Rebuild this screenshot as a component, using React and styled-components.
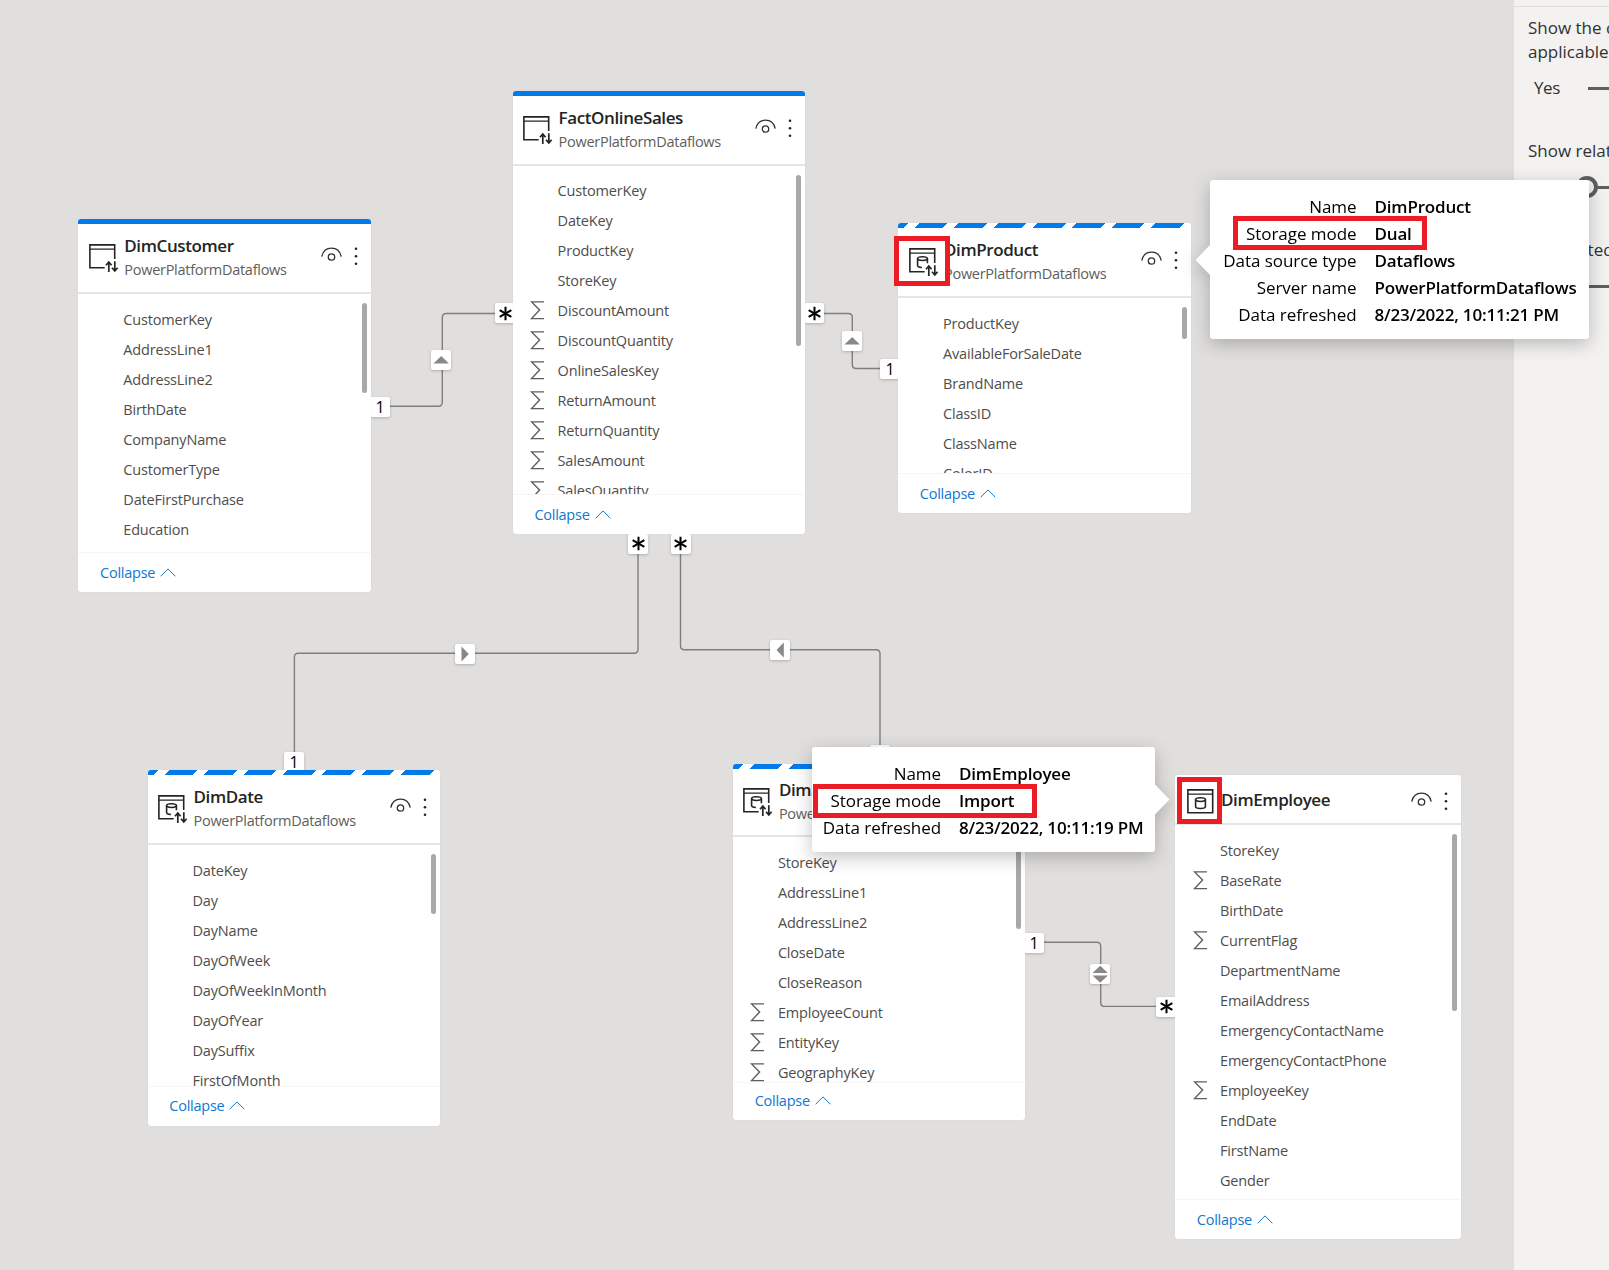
import React from 'react';
import styled, { createGlobalStyle, css } from 'styled-components';
import { Asterisk } from 'lucide-react';

const GlobalStyle = createGlobalStyle`
  * { box-sizing: border-box; }
  body { margin: 0; font-family: 'Open Sans', 'Noto Sans', sans-serif; }
`;

const Screen = styled.div`
  position: relative;
  display: flex;
  width: 1609px;
  height: 1270px;
  overflow: hidden;
`;

const Canvas = styled.main`
  position: relative;
  flex: 1;
  min-width: 0;
  background: #e0dfdd;
`;

const Links = styled.svg`
  position: absolute;
  inset: 0;
  fill: none;
  stroke: #7f7e7c;
  stroke-width: 1.4;
`;

const Marker = styled.div`
  position: absolute;
  left: ${p => p.$x}px;
  top: ${p => p.$y}px;
  width: ${p => p.$w || 20}px;
  height: 20px;
  display: flex;
  align-items: center;
  justify-content: center;
  background: #fff;
  border-radius: 2px;
  box-shadow: 0 1px 3px rgba(0, 0, 0, 0.22);
  color: #000;
  font-size: 16px;
  font-weight: 500;
  line-height: 20px;
  svg { flex: none; display: block; }
  path { stroke-linecap: butt; }
`;

/* ---------- table cards ---------- */

const CardFrame = styled.section`
  position: absolute;
  left: ${p => p.$x}px;
  top: ${p => p.$y}px;
  width: ${p => p.$w}px;
  height: ${p => p.$h}px;
  display: flex;
  flex-direction: column;
  overflow: hidden;
  background: #fff;
  border-radius: 3px;
  box-shadow: 0 0 1px rgba(0, 0, 0, 0.12);
`;

const accents = {
  solid: css`background: #027bea;`,
  striped: css`
    background: repeating-linear-gradient(
      135deg,
      #027bea 0 7.4px,
      #fff 7.4px 15.1px,
      #027bea 15.1px 27.85px
    );
  `,
};

const Accent = styled.div`
  flex: none;
  height: 5px;
  ${p => accents[p.$kind]}
`;

const CardHeader = styled.header`
  flex: none;
  display: flex;
  height: ${p => p.$h}px;
  padding: ${p => p.$pad}px 13px 0 ${p => p.$left}px;
  border-bottom: 2px solid #e6e5e4;
`;

const IconSlot = styled.div`
  flex: none;
  width: ${p => p.$w}px;
  padding-top: ${p => p.$top}px;
  svg { display: block; }
`;

const Titles = styled.div`
  flex: 1;
  min-width: 0;
  white-space: nowrap;
`;

const Title = styled.div`
  font-size: 17px;
  font-weight: 550;
  line-height: 24px;
  letter-spacing: -0.4px;
  color: #252423;
`;

const Subtitle = styled.div`
  font-size: 14.5px;
  font-weight: 380;
  line-height: 24px;
  letter-spacing: -0.28px;
  color: #605e5c;
`;

const Actions = styled.div`
  flex: none;
  display: flex;
  gap: 12px;
  padding-top: ${p => p.$top}px;
  svg { display: block; }
`;

const FieldList = styled.div`
  position: relative;
  flex: 1;
  min-height: 0;
  overflow: hidden;
  padding-top: ${p => p.$pad}px;
`;

const FieldRow = styled.div`
  display: flex;
  align-items: center;
  height: 30px;
  padding-left: 17.5px;
  font-size: 14.5px;
  line-height: 30px;
  letter-spacing: -0.18px;
  color: #4f4d4b;
`;

const SigmaSlot = styled.span`
  flex: none;
  width: 27.5px;
  height: 20px;
  svg { display: block; }
`;

const Scrollbar = styled.div`
  position: absolute;
  top: 9px;
  right: 4px;
  width: 5px;
  height: ${p => p.$h}px;
  border-radius: 3px;
  background: #a8a8a8;
`;

const CardFooter = styled.footer`
  flex: none;
  display: flex;
  align-items: center;
  gap: 5px;
  height: ${p => p.$h}px;
  padding-left: 21.8px;
  border-top: 1px solid #f7f6f5;
  font-size: 14.5px;
  line-height: 38px;
  letter-spacing: -0.25px;
  color: #1078d0;
  svg { margin-top: -1px; }
`;

/* ---------- tooltips and highlights ---------- */

const Tip = styled.dl`
  position: absolute;
  left: ${p => p.$x}px;
  top: ${p => p.$y}px;
  width: ${p => p.$w}px;
  height: ${p => p.$h}px;
  margin: 0;
  padding-top: 13px;
  display: grid;
  grid-template-columns: ${p => p.$label}px 1fr;
  grid-auto-rows: 27px;
  column-gap: 18.5px;
  background: #fff;
  border-radius: 3px;
  filter: drop-shadow(0 5px 9px rgba(0, 0, 0, 0.24));
  font-size: 17px;
  line-height: 27px;
  color: #000;
  white-space: nowrap;
  &::before {
    content: '';
    position: absolute;
    top: ${p => p.$arrow}px;
    ${p => (p.$side === 'left' ? 'right: 100%;' : 'left: 100%;')}
    width: 14.5px;
    height: 30px;
    background: #fff;
    clip-path: ${p =>
      p.$side === 'left' ? 'polygon(100% 0, 0 50%, 100% 100%)' : 'polygon(0 0, 100% 50%, 0 100%)'};
  }
`;

const TipLabel = styled.dt`
  text-align: right;
  letter-spacing: -0.05px;
  margin-right: -0.5px;
`;

const TipValue = styled.dd`
  margin: 0;
  font-weight: 550;
  letter-spacing: -0.18px;
`;

const Highlight = styled.div`
  position: absolute;
  left: ${p => p.$x}px;
  top: ${p => p.$y}px;
  width: ${p => p.$w}px;
  height: ${p => p.$h}px;
  border: 5px solid #ed1c24;
`;

/* ---------- settings panel ---------- */

const Panel = styled.aside`
  flex: none;
  width: 95px;
  overflow: hidden;
  background: #f3f2f1;
  color: #323130;
  font-size: 17px;
  line-height: 24px;
  white-space: nowrap;
`;

const PanelEdge = styled.div`
  height: 7px;
  border-bottom: 1px solid #dddcda;
`;

const Setting = styled.div`
  padding: ${p => p.$top}px 0 0 14px;
`;

const Toggle = styled.div`
  display: flex;
  align-items: center;
  height: 24px;
  margin-top: 12px;
  padding-left: 6px;
`;

const ToggleLabel = styled.span`
  flex: none;
  width: 54px;
  letter-spacing: -0.4px;
`;

const Knob = styled.span`
  flex: none;
  width: 22px;
  height: 22px;
  margin-left: 42px;
  border: 4px solid #605e5c;
  border-radius: 50%;
`;

const Track = styled.span`
  flex: none;
  width: 60px;
  height: 3px;
  margin-top: 1px;
  background: #605e5c;
`;

/* ---------- drawings ---------- */

const Arrows = () => (
  <g strokeWidth="1.7">
    <path d="M19.8 28V18.2M17 21.200l2.800-3.200 2.800 3.200" />
    <path d="M25.800 17.200V27M23 23.800l2.800 3.200 2.800-3.200" />
  </g>
);

const Cylinder = () => (
  <>
    <ellipse cx="13.500" cy="10.600" rx="4.900" ry="1.900" />
    <path d="M8.600 10.600v6.900c0 1.200 2.200 2 4.900 2s4.900-.8 4.900-2v-6.900" />
  </>
);

const CutCylinder = () => (
  <>
    <ellipse cx="13.500" cy="10.600" rx="4.900" ry="1.900" />
    <path d="M8.600 10.600v6.900c0 1 1.600 1.800 4.300 2M18.400 10.600v4.600" />
  </>
);

function TableIcon({ mode }) {
  const open = mode !== 'import';
  return (
    <svg width="30" height="30" viewBox="0 0 30 30" fill="none" stroke="#252423" strokeWidth="1.6">
      {open ? <path d="M25.700 15V.9H.9v22.900h14.800" /> : <path d="M.9.9h24.800v22.900H.9z" />}
      <path d="M.9 5.100h24.800" strokeWidth="1.3" />
      {mode === 'dual' && <CutCylinder />}
      {mode === 'import' && <Cylinder />}
      {open && <Arrows />}
    </svg>
  );
}

const EyeIcon = () => (
  <svg width="21" height="16" viewBox="0 0 21 16" fill="none" stroke="#323130" strokeWidth="1.3">
    <path d="M.8 9.600C1.900 4.400 5.700 1.200 10.500 1.200S19.100 4.400 20.200 9.600" />
    <circle cx="10.500" cy="10" r="3.200" />
  </svg>
);

const MoreIcon = () => (
  <svg width="4" height="20" viewBox="0 0 4 20" fill="#252423">
    <circle cx="2" cy="1.800" r="1.300" />
    <circle cx="2" cy="9.300" r="1.300" />
    <circle cx="2" cy="16.800" r="1.300" />
  </svg>
);

const Sigma = () => (
  <svg width="15" height="19" viewBox="0 0 15 19" fill="none" stroke="#605e5c" strokeWidth="1.4">
    <path d="M14 .9H1.600L9.600 9 1.600 17.600H14" />
  </svg>
);

const Chevron = () => (
  <svg width="16" height="9" viewBox="0 0 16 9" fill="none" stroke="#1078d0" strokeWidth="1">
    <path d="M.6 8.300 8 .9l7.400 7.400" />
  </svg>
);

const trianglePaths = {
  up: 'M2.500 13.500 10.200 6l7.700 7.500z',
  right: 'M6.500 2.500 13.800 10l-7.300 7.500z',
  left: 'M13.800 2.500 6.500 10l7.300 7.500z',
  both: 'M2.500 9 10.200 1.700 17.900 9zM2.500 11.500H17.900L10.200 18.800z',
};

const Direction = ({ dir }) => (
  <svg width="20" height="20" viewBox="0 0 20 20" fill="#8a8886">
    <path d={trianglePaths[dir]} />
  </svg>
);

/* ---------- data ---------- */

const SOURCE = 'PowerPlatformDataflows';

const tables = [
  {
    name: 'DimCustomer', source: SOURCE, mode: 'direct', accent: 'solid',
    x: 78.300, y: 219.300, w: 293, h: 373, scroll: 90,
    fields: ['CustomerKey', 'AddressLine1', 'AddressLine2', 'BirthDate', 'CompanyName', 'CustomerType', 'DateFirstPurchase', 'Education'],
  },
  {
    name: 'FactOnlineSales', source: SOURCE, mode: 'direct', accent: 'solid', listPad: 9.6,
    x: 512.600, y: 91, w: 292.400, h: 443, scroll: 171,
    fields: ['CustomerKey', 'DateKey', 'ProductKey', 'StoreKey', '+DiscountAmount', '+DiscountQuantity', '+OnlineSalesKey', '+ReturnAmount', '+ReturnQuantity', '+SalesAmount', '+SalesQuantity'],
  },
  {
    name: 'DimProduct', source: SOURCE, mode: 'dual', accent: 'striped',
    x: 898, y: 223, w: 293, h: 290, scroll: 32,
    fields: ['ProductKey', 'AvailableForSaleDate', 'BrandName', 'ClassID', 'ClassName', 'ColorID'],
  },
  {
    name: 'DimDate', source: SOURCE, mode: 'dual', accent: 'striped',
    x: 147.500, y: 770.300, w: 292.500, h: 355.700, scroll: 60,
    fields: ['DateKey', 'Day', 'DayName', 'DayOfWeek', 'DayOfWeekInMonth', 'DayOfYear', 'DaySuffix', 'FirstOfMonth'],
  },
  {
    name: 'DimStore', source: SOURCE, mode: 'dual', accent: 'striped', lift: 2, footer: 38.5,
    x: 732.900, y: 764, w: 292.600, h: 356, scroll: 83,
    fields: ['StoreKey', 'AddressLine1', 'AddressLine2', 'CloseDate', 'CloseReason', '+EmployeeCount', '+EntityKey', '+GeographyKey'],
  },
  {
    name: 'DimEmployee', mode: 'import',
    x: 1175, y: 775, w: 286, h: 464, scroll: 177,
    fields: ['StoreKey', '+BaseRate', 'BirthDate', '+CurrentFlag', 'DepartmentName', 'EmailAddress', 'EmergencyContactName', 'EmergencyContactPhone', '+EmployeeKey', 'EndDate', 'FirstName', 'Gender'],
  },
];

const links = [
  'M390 406.300H438.300Q442.300 406.300 442.300 402.300V317.500Q442.300 313.500 446.300 313.500H496',
  'M823 313.500H848.300Q852.300 313.500 852.300 317.500V364.500Q852.300 368.500 856.300 368.500H881',
  'M638 552V649.300Q638 653.300 634 653.300H298.400Q294.400 653.300 294.400 657.300V753',
  'M680.500 552V645.800Q680.500 649.800 684.500 649.800H876Q880 649.800 880 653.800V746',
  'M1043 942.300H1096.700Q1100.700 942.300 1100.700 946.300V1002.400Q1100.700 1006.400 1104.700 1006.400H1158',
];

const ends = [
  { kind: 'one', x: 370, y: 396.500, w: 20 },
  { kind: 'many', x: 495, y: 303.400, w: 20 },
  { kind: 'many', x: 804, y: 303.400, w: 20 },
  { kind: 'one', x: 880, y: 358.500, w: 20 },
  { kind: 'many', x: 628, y: 533.500 },
  { kind: 'many', x: 670.500, y: 533.500 },
  { kind: 'one', x: 284, y: 752 },
  { kind: 'one', x: 870, y: 745 },
  { kind: 'one', x: 1024, y: 932.500, w: 20 },
  { kind: 'many', x: 1156.400, y: 996.600, w: 20 },
];

const directions = [
  { dir: 'up', x: 431.300, y: 349.500 },
  { dir: 'up', x: 841.500, y: 331 },
  { dir: 'right', x: 455, y: 643.500 },
  { dir: 'left', x: 770.300, y: 639.500 },
  { dir: 'both', x: 1090.300, y: 963.500 },
];

const tips = [
  {
    x: 1210, y: 180, w: 379, h: 159, label: 146, side: 'left', arrow: 65,
    rows: [['Name', 'DimProduct'], ['Storage mode', 'Dual'], ['Data source type', 'Dataflows'], ['Server name', SOURCE], ['Data refreshed', '8/23/2022, 10:11:21 PM']],
  },
  {
    x: 812, y: 747, w: 343, h: 105, label: 128.500, side: 'right', arrow: 37.500,
    rows: [['Name', 'DimEmployee'], ['Storage mode', 'Import'], ['Data refreshed', '8/23/2022, 10:11:19 PM']],
  },
];

const highlights = [
  { x: 894, y: 236, w: 56, h: 50 },
  { x: 1233, y: 216, w: 194, h: 34 },
  { x: 813, y: 784, w: 224, h: 34 },
  { x: 1177, y: 777, w: 45, h: 47 },
];

function TableCard({ table }) {
  const { name, source, mode, accent, x, y, w, h, scroll, fields, lift = 0, listPad = 10.5, footer = 40 } = table;
  const compact = !accent;
  return (
    <CardFrame $x={x} $y={y} $w={w} $h={h}>
      {accent && <Accent $kind={accent} />}
      <CardHeader $h={(compact ? 50 : 70) - lift} $pad={(compact ? 13.4 : 9.5) - lift / 2} $left={compact ? 12 : 10.5}>
        <IconSlot $w={compact ? 34 : 35.5} $top={compact ? 0.6 : 10}>
          <TableIcon mode={mode} />
        </IconSlot>
        <Titles>
          <Title>{name}</Title>
          {source && <Subtitle>{source}</Subtitle>}
        </Titles>
        <Actions $top={compact ? 4.1 : 13.5}>
          <EyeIcon />
          <MoreIcon />
        </Actions>
      </CardHeader>
      <FieldList $pad={listPad}>
        {fields.map(f => (
          <FieldRow key={f}>
            <SigmaSlot>{f[0] === '+' && <Sigma />}</SigmaSlot>
            {f.replace('+', '')}
          </FieldRow>
        ))}
        <Scrollbar $h={scroll} />
      </FieldList>
      <CardFooter $h={footer}>
        Collapse
        <Chevron />
      </CardFooter>
    </CardFrame>
  );
}

export default function App() {
  return (
    <Screen>
      <GlobalStyle />
      <Canvas>
        <Links width="1514" height="1270">
          {links.map(d => <path key={d} d={d} />)}
        </Links>
        {ends.map(e => (
          <Marker key={`${e.x}-${e.y}`} $x={e.x} $y={e.y} $w={e.w}>
            {e.kind === 'one' ? '1' : <Asterisk size={27} strokeWidth={1.8} />}
          </Marker>
        ))}
        {directions.map(d => (
          <Marker key={d.x} $x={d.x} $y={d.y}>
            <Direction dir={d.dir} />
          </Marker>
        ))}
        {tables.map(t => <TableCard key={t.name} table={t} />)}
      </Canvas>
      <Panel>
        <PanelEdge />
        <Setting $top={8.5}>
          Show the database in the header when<br />applicable
          <Toggle><ToggleLabel>Yes</ToggleLabel><Track /></Toggle>
        </Setting>
        <Setting $top={39}>
          Show related fields when card is collapsed
          <Toggle><Knob /><Track /></Toggle>
        </Setting>
        <Setting $top={39}>
          Pin related fields to top of card
          <Toggle><ToggleLabel /><Track /></Toggle>
        </Setting>
      </Panel>
      {tips.map(t => (
        <Tip key={t.x} $x={t.x} $y={t.y} $w={t.w} $h={t.h} $label={t.label} $side={t.side} $arrow={t.arrow}>
          {t.rows.map(([label, value]) => (
            <React.Fragment key={label}>
              <TipLabel>{label}</TipLabel>
              <TipValue>{value}</TipValue>
            </React.Fragment>
          ))}
        </Tip>
      ))}
      {highlights.map(b => <Highlight key={b.x} $x={b.x} $y={b.y} $w={b.w} $h={b.h} />)}
    </Screen>
  );
}
